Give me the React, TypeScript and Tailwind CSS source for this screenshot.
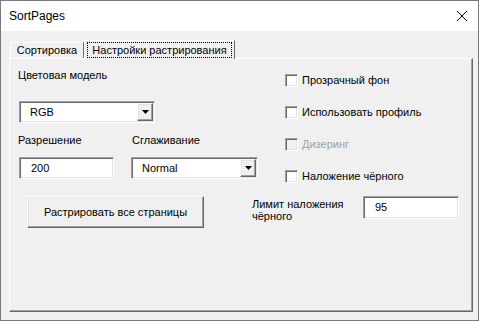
const sunken =
  'bg-white border border-t-[#a0a0a0] border-l-[#a0a0a0] border-r-white border-b-white shadow-[inset_1px_1px_0_#696969,inset_-1px_-1px_0_#e3e3e3]';
const raised =
  'bg-[#f0f0f0] border border-t-white border-l-white border-r-[#696969] border-b-[#696969] shadow-[inset_-1px_-1px_0_#a0a0a0,inset_1px_1px_0_#e3e3e3]';

function ComboBox({ value, width }: { value: string; width: string }) {
  return (
    <div className={`${sunken} ${width} h-[22px] flex items-center pl-[10px] pr-px`}>
      <span className="flex-1">{value}</span>
      {/* Dropdown button */}
      <div className={`${raised} w-[16px] h-[18px] flex items-center justify-center`}>
        <svg width="7" height="4" viewBox="0 0 7 4">
          <path d="M0 0h7L3.5 4z" fill="#000" />
        </svg>
      </div>
    </div>
  );
}

function TextBox({ value, width, height }: { value: string; width: string; height: string }) {
  return (
    <div className={`${sunken} ${width} ${height} flex items-center pl-[11px]`}>
      {value}
    </div>
  );
}

function CheckBox({ label, disabled }: { label: string; disabled?: boolean }) {
  return (
    <div className="h-[13px] flex items-center gap-[4px]">
      <div
        className={`w-[13px] h-[13px] border border-t-[#a0a0a0] border-l-[#a0a0a0] border-r-white border-b-white shadow-[inset_1px_1px_0_#696969,inset_-1px_-1px_0_#e3e3e3] ${
          disabled ? 'bg-[#f0f0f0]' : 'bg-white'
        }`}
      />
      <span className={disabled ? 'text-[#a0a0a0]' : ''}>{label}</span>
    </div>
  );
}

export default function App() {
  return (
    <div className="w-[479px] h-[321px] border border-[#7a7a7a] bg-[#f0f0f0] flex flex-col font-['Liberation_Sans',Arial,sans-serif] text-[11px] leading-[13px] text-black">
      {/* Title bar */}
      <div className="h-[30px] bg-white flex items-center justify-between pl-[8px] pr-[11px]">
        <span className="text-[12px]">SortPages</span>
        <svg width="10" height="10" viewBox="0 0 10 10">
          <path d="M0 0L10 10M10 0L0 10" stroke="#000" strokeWidth="1" />
        </svg>
      </div>

      <div className="flex-1 pl-[8px] pr-[5px] pt-[9px] pb-[8px] flex flex-col">
        {/* Tabs */}
        <div className="h-[18px] flex items-end pl-px">
          <div className="w-[74px] h-[16px] border-t border-l border-r border-t-white border-l-white border-r-[#696969] flex items-center justify-center">
            Сортировка
          </div>
          <div className="relative z-10 -mb-px w-[151px] h-[19px] bg-[#f0f0f0] border-t border-l border-r border-t-white border-l-white border-r-[#696969] px-[2px] pt-px">
            <div className="h-[16px] border border-dotted border-black flex items-center justify-center">
              Настройки растрирования
            </div>
          </div>
        </div>

        {/* Panel */}
        <div className="w-[464px] h-[254px] border border-t-white border-l-white border-r-[#696969] border-b-[#696969] shadow-[inset_-1px_-1px_0_#a0a0a0] flex flex-col">
          <div className="h-[124px] flex">
            {/* Left column */}
            <div className="w-[249px] pl-[8px] pt-[10px] flex flex-col">
              <div className="h-[13px]">Цветовая модель</div>
              <div className="mt-[19px] ml-px">
                <ComboBox value="RGB" width="w-[136px]" />
              </div>
              <div className="mt-[11px] h-[13px] flex">
                <span className="w-[114px]">Разрешение</span>
                <span>Сглаживание</span>
              </div>
              <div className="mt-[10px] ml-px flex">
                <TextBox value="200" width="w-[95px]" height="h-[22px]" />
                <div className="ml-[17px]">
                  <ComboBox value="Normal" width="w-[127px]" />
                </div>
              </div>
            </div>

            {/* Right column: checkboxes */}
            <div className="ml-[26px] pt-[15px] flex flex-col gap-[19px]">
              <CheckBox label="Прозрачный фон" />
              <CheckBox label="Использовать профиль" />
              <CheckBox label="Дизеринг" disabled />
              <CheckBox label="Наложение чёрного" />
            </div>
          </div>

          {/* Bottom row */}
          <div className="mt-[13px] pl-[17px] flex items-start">
            <button className={`${raised} w-[177px] h-[32px] flex items-center justify-center`}>
              Растрировать все страницы
            </button>
            <div className="ml-[48px] mt-[2px] w-[111px] leading-[12px]">Лимит наложения чёрного</div>
            <TextBox value="95" width="w-[96px]" height="h-[23px]" />
          </div>
        </div>
      </div>
    </div>
  );
}
